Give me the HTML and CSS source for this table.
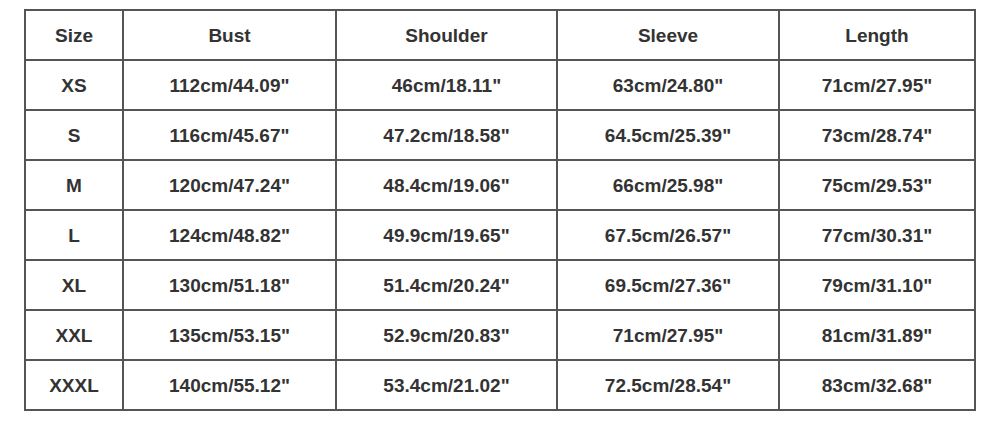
FILE: index.html
```html
<!DOCTYPE html>
<html>
<head>
<meta charset="utf-8">
<link rel="stylesheet" href="styles.css">
</head>
<body>
<table class="size-table">
  <colgroup>
    <col class="c1"><col class="c2"><col class="c3"><col class="c4"><col class="c5">
  </colgroup>
  <tr><td>Size</td><td>Bust</td><td>Shoulder</td><td>Sleeve</td><td>Length</td></tr>
  <tr><td>XS</td><td>112cm/44.09"</td><td>46cm/18.11"</td><td>63cm/24.80"</td><td>71cm/27.95"</td></tr>
  <tr><td>S</td><td>116cm/45.67"</td><td>47.2cm/18.58"</td><td>64.5cm/25.39"</td><td>73cm/28.74"</td></tr>
  <tr><td>M</td><td>120cm/47.24"</td><td>48.4cm/19.06"</td><td>66cm/25.98"</td><td>75cm/29.53"</td></tr>
  <tr><td>L</td><td>124cm/48.82"</td><td>49.9cm/19.65"</td><td>67.5cm/26.57"</td><td>77cm/30.31"</td></tr>
  <tr><td>XL</td><td>130cm/51.18"</td><td>51.4cm/20.24"</td><td>69.5cm/27.36"</td><td>79cm/31.10"</td></tr>
  <tr><td>XXL</td><td>135cm/53.15"</td><td>52.9cm/20.83"</td><td>71cm/27.95"</td><td>81cm/31.89"</td></tr>
  <tr><td>XXXL</td><td>140cm/55.12"</td><td>53.4cm/21.02"</td><td>72.5cm/28.54"</td><td>83cm/32.68"</td></tr>
</table>
</body>
</html>
```
FILE: styles.css
```css
html, body {
  margin: 0;
  padding: 0;
  background: #ffffff;
}
body {
  padding: 9px 0 0 24px;
  font-family: "Liberation Sans", Arial, sans-serif;
}
.size-table {
  border-collapse: collapse;
  table-layout: fixed;
  width: 950px;
}
.c1 { width: 98px; }
.c2 { width: 213px; }
.c3 { width: 221px; }
.c4 { width: 222px; }
.c5 { width: 196px; }
.size-table td {
  border: 2px solid #555555;
  height: 46px;
  padding: 2px 0 0 0;
  text-align: center;
  vertical-align: middle;
  font-size: 19px;
  font-weight: bold;
  color: #333333;
}
```
